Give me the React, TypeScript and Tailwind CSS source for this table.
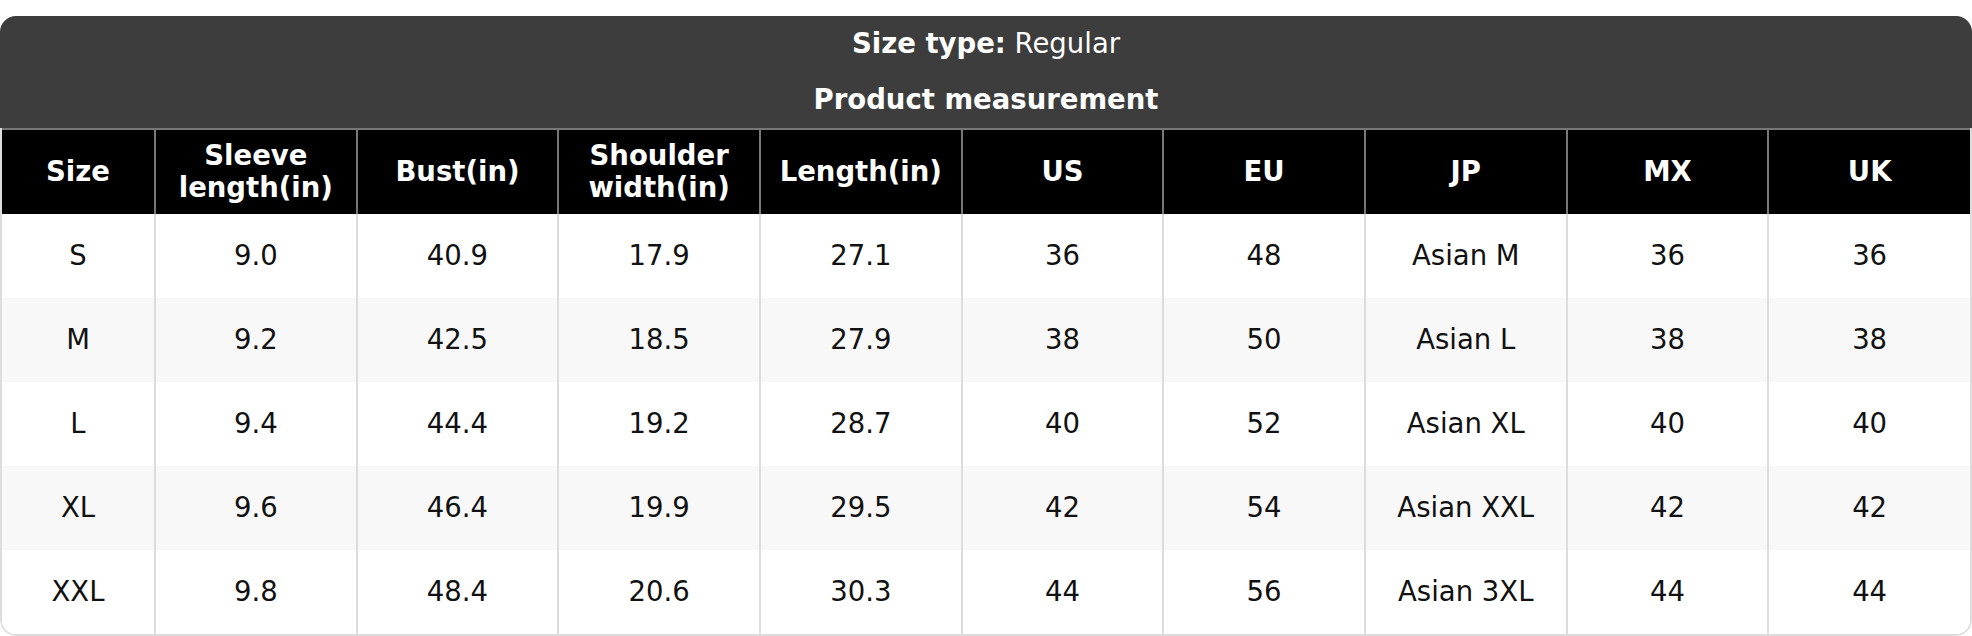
import React from 'react';

const headers = ['Size', 'Sleeve length(in)', 'Bust(in)', 'Shoulder width(in)', 'Length(in)', 'US', 'EU', 'JP', 'MX', 'UK'];

const rows = [
  ['S', '9.0', '40.9', '17.9', '27.1', '36', '48', 'Asian M', '36', '36'],
  ['M', '9.2', '42.5', '18.5', '27.9', '38', '50', 'Asian L', '38', '38'],
  ['L', '9.4', '44.4', '19.2', '28.7', '40', '52', 'Asian XL', '40', '40'],
  ['XL', '9.6', '46.4', '19.9', '29.5', '42', '54', 'Asian XXL', '42', '42'],
  ['XXL', '9.8', '48.4', '20.6', '30.3', '44', '56', 'Asian 3XL', '44', '44'],
];

export default function App() {
  return (
    <div className="bg-white pt-4" style={{ fontFamily: '"DejaVu Sans", Verdana, sans-serif' }}>
      <div className="rounded-2xl overflow-hidden text-[27.5px] leading-[1.15]">
        {/* Title band */}
        <div className="bg-[#3d3d3d] text-white text-center">
          <div className="h-[56px] flex items-center justify-center">
            <span>
              <b>Size type:</b> Regular
            </span>
          </div>
          <div className="h-[56px] flex items-center justify-center font-bold">Product measurement</div>
        </div>

        <div className="border-x-2 border-b-2 border-[#dddddd] rounded-b-2xl overflow-hidden">
          <table className="w-full table-fixed border-collapse text-center">
            <colgroup>
              <col className="w-[153px]" />
              {headers.slice(1).map((h) => (
                <col key={h} />
              ))}
            </colgroup>
            <thead>
              <tr className="bg-black text-white">
                {headers.map((h, i) => (
                  <th
                    key={h}
                    className={`h-[85px] px-2 font-bold border-t-2 border-[#777777] ${i > 0 ? 'border-l-2' : ''}`}
                  >
                    {h.includes(' ') ? (
                      <>
                        {h.split(' ')[0]}
                        <br />
                        {h.split(' ')[1]}
                      </>
                    ) : (
                      h
                    )}
                  </th>
                ))}
              </tr>
            </thead>
            <tbody className="text-[#111111]">
              {rows.map((r, ri) => (
                <tr key={r[0]} className={ri % 2 === 1 ? 'bg-[#f8f8f8]' : 'bg-white'}>
                  {r.map((c, ci) => (
                    <td
                      key={ci}
                      className={`h-[84px] px-2 ${ci > 0 ? 'border-l-2 border-[#dddddd]' : ''}`}
                    >
                      {c}
                    </td>
                  ))}
                </tr>
              ))}
            </tbody>
          </table>
        </div>
      </div>
    </div>
  );
}
